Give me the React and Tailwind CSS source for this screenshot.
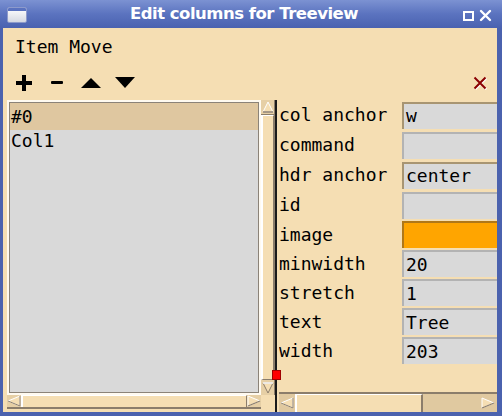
import React from "react";

const rows = [
  { label: "col anchor", value: "w", hl: true },
  { label: "command", value: "" },
  { label: "hdr anchor", value: "center", hl: true },
  { label: "id", value: "" },
  { label: "image", value: "", orange: true },
  { label: "minwidth", value: "20" },
  { label: "stretch", value: "1" },
  { label: "text", value: "Tree" },
  { label: "width", value: "203" },
];

function ArrowUp() {
  return (
    <svg width="12" height="12" viewBox="0 0 12 12">
      <path d="M6 1 L11 11 L1 11 Z" fill="#f5deb3" stroke="#fff" strokeWidth="1" />
      <path d="M11 11 L1 11" stroke="#8b7d6b" strokeWidth="1.5" />
    </svg>
  );
}

function ArrowDown() {
  return (
    <svg width="12" height="12" viewBox="0 0 12 12">
      <path d="M1 1 L11 1 L6 11 Z" fill="#f5deb3" stroke="#8b7d6b" strokeWidth="1" />
      <path d="M1 1 L11 1" stroke="#fff" strokeWidth="1.5" />
    </svg>
  );
}

function ArrowLeft() {
  return (
    <svg width="14" height="12" viewBox="0 0 14 12">
      <path d="M1 6 L13 1 L13 11 Z" fill="#f5deb3" stroke="#fff" strokeWidth="1" />
      <path d="M13 1 L13 11 L1 6" fill="none" stroke="#8b7d6b" strokeWidth="1" />
    </svg>
  );
}

function ArrowRight() {
  return (
    <svg width="14" height="12" viewBox="0 0 14 12">
      <path d="M1 1 L13 6 L1 11 Z" fill="#f5deb3" stroke="#fff" strokeWidth="1" />
      <path d="M13 6 L1 11" fill="none" stroke="#8b7d6b" strokeWidth="1.2" />
    </svg>
  );
}

export default function App() {
  return (
    <div className="w-[502px] h-[416px] flex flex-col bg-[#4b62ae] font-['DejaVu_Sans_Mono',monospace] text-black overflow-hidden">
      {/* title bar */}
      <div className="h-[28px] shrink-0 relative flex items-center justify-center bg-gradient-to-b from-[#7c92d2] via-[#5b73bf] to-[#4a62b0]">
        <div className="absolute left-[7px] top-[7px] w-[20px] h-[16px] rounded-[2px] border border-[#8d9acb] bg-gradient-to-b from-[#ffffff] to-[#d6d9e2] overflow-hidden">
          <div className="h-[3px] bg-[#5a72bf]" />
        </div>
        <span className="text-white font-bold text-[16.5px] font-['DejaVu_Sans',sans-serif] tracking-[-0.5px] pr-[14px]">
          Edit columns for Treeview
        </span>
        <div className="absolute right-[28px] top-[11px] w-[11px] h-[10px] border-2 border-white" />
        <svg className="absolute right-[10px] top-[9px]" width="13" height="13" viewBox="0 0 13 13">
          <path d="M2 2 L11 11 M11 2 L2 11" stroke="#fff" strokeWidth="2.4" strokeLinecap="round" />
        </svg>
      </div>

      {/* body */}
      <div className="flex-1 ml-[3px] mr-[5px] mb-[4px] bg-[#f5deb3] flex flex-col">
        <div className="h-[37px] flex items-center pl-[12px] text-[18px] leading-none">Item Move</div>

        <div className="h-[35px] flex items-center pl-[12px] pr-[10px]">
          <svg width="18" height="18" viewBox="0 0 18 18">
            <path d="M7 1 h4 v6 h6 v4 h-6 v6 h-4 v-6 h-6 v-4 h6 Z" fill="#000" />
          </svg>
          <div className="ml-[18px] w-[12px] h-[3px] rounded-[1px] bg-black" />
          <svg width="20" height="10" viewBox="0 0 20 10" className="ml-[18px]">
            <path d="M10 0 L20 10 L0 10 Z" fill="#000" />
          </svg>
          <svg width="20" height="11" viewBox="0 0 20 11" className="ml-[14px]">
            <path d="M0 0 L20 0 L10 11 Z" fill="#000" />
          </svg>
          <svg width="14" height="14" viewBox="0 0 14 14" className="ml-auto">
            <path d="M1.5 1.5 L12.5 12.5 M12.5 1.5 L1.5 12.5" stroke="#fff" strokeWidth="2" transform="translate(0.8 0.8)" />
            <path d="M1.5 1.5 L12.5 12.5 M12.5 1.5 L1.5 12.5" stroke="#8b0000" strokeWidth="2" />
          </svg>
        </div>

        {/* main area */}
        <div className="flex-1 flex min-h-0">
          {/* left pane */}
          <div className="w-[272px] pl-[4px] flex flex-col pb-[3px]">
            <div className="flex flex-1 min-h-0">
              <div className="flex-1 border-2 border-[#fffaf0]">
                <div className="h-full bg-[#d9d9d9] border border-[#8b8378] text-[18px] leading-none">
                  <div className="h-[27px] bg-[#dfc7a0] flex items-center pl-[1px]">#0</div>
                  <div className="h-[22px] flex items-center pl-[1px]">Col1</div>
                </div>
              </div>
              <div className="w-[14px] bg-[#e6cfa5] flex flex-col border-r border-[#8b7d6b]">
                <div className="h-[15px] flex items-center justify-center border-b border-[#8b7d6b]">
                  <ArrowUp />
                </div>
                <div className="flex-1 bg-[#f5deb3] border-l-2 border-t border-[#fff] border-r border-r-[#8b7d6b] border-b border-b-[#8b7d6b]" />
                <div className="h-[15px] flex items-center justify-center">
                  <ArrowDown />
                </div>
              </div>
            </div>
            <div className="h-[14px] flex">
              <div className="flex-1 flex items-center bg-[#e6cfa5] border-b-2 border-[#8b7d6b]">
                <div className="w-[14px] flex items-center justify-center">
                  <ArrowLeft />
                </div>
                <div className="flex-1 h-full bg-[#f5deb3] border-t border-l-2 border-[#fff] border-r border-r-[#8b7d6b]" />
                <div className="w-[14px] flex items-center justify-center">
                  <ArrowRight />
                </div>
              </div>
              <div className="w-[14px] bg-[#f5deb3]" />
            </div>
          </div>

          {/* sash */}
          <div className="relative w-[2px] bg-[#1a1a1a]">
            <div className="absolute left-[-3px] top-[270px] w-[9px] h-[10px] bg-[#ff0000] border border-[#a00000]" />
          </div>

          {/* right pane */}
          <div className="flex-1 flex flex-col pl-[2px] min-w-0">
            <div className="flex-1 overflow-hidden">
              {rows.map((r, i) => (
                <div key={i} className={`flex items-center ${i < 4 ? "h-[30px]" : "h-[29px]"}`}>
                  <div className="w-[123px] text-[18px] leading-none whitespace-nowrap">{r.label}</div>
                  <div
                    className={`flex-1 h-[27px] flex items-center pl-[2px] text-[18px] leading-none ${
                      r.orange
                        ? "bg-[#ffa500] border-t-2 border-l-2 border-[#b07818]"
                        : r.hl
                        ? "bg-[#d9d9d9] border-t-2 border-l-2 border-[#a89572]"
                        : "bg-[#d9d9d9] border-t-2 border-l-2 border-[#b3b3b3]"
                    }`}
                  >
                    {r.value}
                  </div>
                </div>
              ))}
            </div>
            <div className="h-[20px] flex items-center bg-[#e0c9a0] border-t-2 border-[#8b7d6b]">
              <div className="w-[16px] h-full flex items-center justify-center">
                <ArrowLeft />
              </div>
              <div className="w-[128px] h-full bg-[#f5deb3] border-t border-l-2 border-[#fff] border-r-2 border-r-[#8b7d6b]" />
              <div className="flex-1" />
              <div className="w-[18px] h-full flex items-center justify-center">
                <ArrowRight />
              </div>
            </div>
          </div>
        </div>
      </div>
    </div>
  );
}
